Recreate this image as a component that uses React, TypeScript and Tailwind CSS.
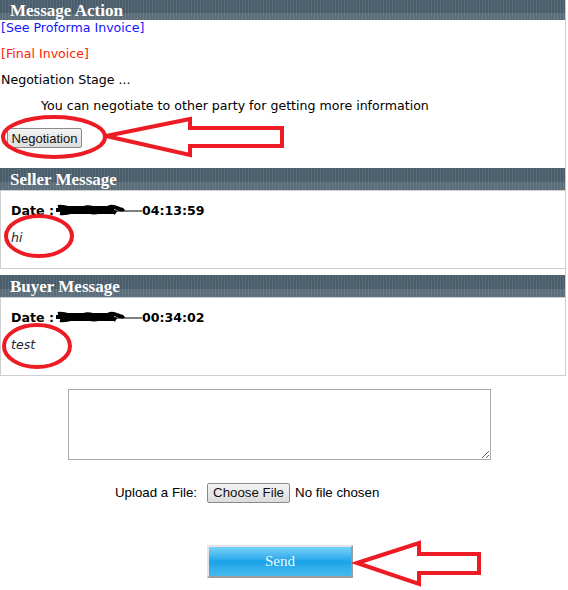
import React from "react";

function Header({ title, tall }: { title: string; tall?: boolean }) {
  return (
    <div
      className={
        tall
          ? "h-[22px] pl-[10px] flex items-center bg-[image:linear-gradient(to_bottom,transparent_64%,rgba(255,255,255,0.1)_64%),repeating-linear-gradient(90deg,#4a5d6a_0px,#4a5d6a_2px,#586b7a_2px,#586b7a_3px)]"
          : "h-[20px] pl-[10px] flex items-center bg-[image:linear-gradient(to_bottom,transparent_66%,rgba(255,255,255,0.1)_66%),repeating-linear-gradient(90deg,#4a5d6a_0px,#4a5d6a_2px,#586b7a_2px,#586b7a_3px)]"
      }
    >
      <span className="font-['Liberation_Serif',serif] font-bold text-[17px] leading-none text-white">
        {title}
      </span>
    </div>
  );
}

// blacked-out part of the date
function Scribble() {
  return (
    <svg width="88" height="14" viewBox="0 0 88 14" className="inline-block align-[-2px]">
      <path
        d="M2 7 L60 7 M4 4 C14 2 20 11 30 5 C38 1 44 12 56 4 C62 2 66 9 70 6 M6 10 C16 12 26 3 36 9 C44 12 52 3 62 10"
        stroke="#000"
        strokeWidth="4"
        fill="none"
      />
      <path d="M10 3 L58 3 L60 11 L8 11 Z" fill="#000" />
      <path d="M60 8 L88 8" stroke="#000" strokeWidth="1" />
    </svg>
  );
}

function MessageBox({ title, time, text }: { title: string; time: string; text: string }) {
  return (
    <div>
      <Header title={title} tall />
      <div className="h-[79px] border-l border-t border-b border-[#cfcfcf] pl-[10px] pt-[12px] flex flex-col gap-[11px] leading-4">
        <div className="font-bold text-black">
          Date :<Scribble />
          {time}
        </div>
        <div className="italic text-[#1e1e38]">{text}</div>
      </div>
    </div>
  );
}

export default function App() {
  return (
    <div className="relative w-[568px] h-[590px] overflow-hidden bg-white text-[12.6px] text-black font-['DejaVu_Sans',Verdana,sans-serif]">
      <div className="w-[566px] border-r border-[#cccccc]">
        <Header title="Message Action" />

        <div className="flex flex-col gap-[10px] leading-4 pl-[1px]">
          <a className="text-[#1414ff]">[See Proforma Invoice]</a>
          <a className="text-[#ff2400]">[Final Invoice]</a>
          <p>Negotiation Stage ...</p>
          <p className="pl-[40px]">You can negotiate to other party for getting more information</p>
        </div>

        <div className="flex pt-[14px] pl-[7px] pb-[20px]">
          <button className="h-[20px] w-[75px] rounded-[2px] border border-[#8a8a8a] bg-gradient-to-b from-[#f4f4f4] to-[#dcdcdc] font-['Liberation_Sans',Arial,sans-serif] text-[13px] leading-none text-[#111]">
            Negotiation
          </button>
        </div>

        <MessageBox title="Seller Message" time="04:13:59" text="hi" />
        <div className="h-[6px]" />
        <MessageBox title="Buyer Message" time="00:34:02" text="test" />
      </div>

      <div className="flex flex-col pt-[13px]">
        <textarea className="ml-[68px] w-[423px] h-[71px] border border-[#a9a9a9] bg-white" />

        <div className="ml-[115px] mt-[23px] flex items-center font-['Liberation_Sans',Arial,sans-serif] text-[13.3px]">
          <span>Upload a File:</span>
          <button className="ml-[10px] h-[20px] w-[83px] rounded-[2px] border border-[#8a8a8a] bg-gradient-to-b from-[#f4f4f4] to-[#dcdcdc] leading-none text-[#111]">
            Choose File
          </button>
          <span className="ml-[5px]">No file chosen</span>
        </div>

        <button className="ml-[207px] mt-[42px] w-[146px] h-[33px] border-2 border-t-[#e4e4e4] border-l-[#e4e4e4] border-r-[#9c9c9c] border-b-[#9c9c9c] bg-gradient-to-b from-[#74d3f8] via-[#19a3e8] to-[#45baf0] font-['Liberation_Serif',serif] text-[15px] text-[#eef8fe]">
          Send
        </button>
      </div>

      <svg
        className="absolute inset-0 pointer-events-none"
        width="568"
        height="590"
        viewBox="0 0 568 590"
      >
        <g stroke="#ed1c24" strokeWidth="4" fill="none">
          <ellipse cx="54" cy="137" rx="51" ry="20" />
          <ellipse cx="39" cy="236" rx="33" ry="20" />
          <ellipse cx="37" cy="346" rx="33" ry="21" />
          <polygon points="106,136 190,119 190,128 282,128 282,146 190,146 190,155" />
          <polygon points="357,563 419,543 419,554 479,554 479,573 419,573 419,584" />
        </g>
      </svg>
    </div>
  );
}
